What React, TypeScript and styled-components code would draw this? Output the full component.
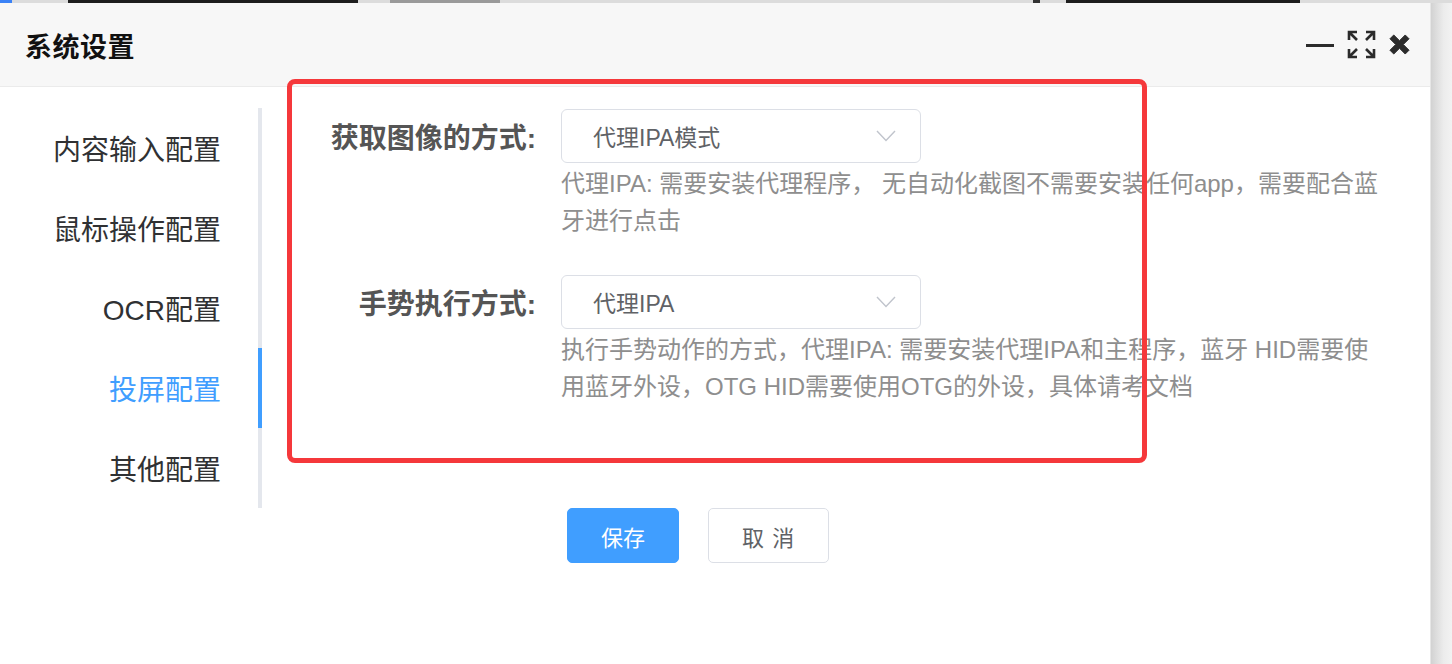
import React from 'react';
import styled, { createGlobalStyle } from 'styled-components';

const font = `"Liberation Sans", "Noto Sans CJK SC", sans-serif`;

const GlobalStyle = createGlobalStyle`
  html, body {
    margin: 0;
    padding: 0;
    background: #fff;
    font-family: ${font};
    overflow: hidden;
  }
`;

const Page = styled.div`
  width: 1452px;
  height: 664px;
  display: flex;
  flex-direction: column;
  overflow: hidden;
`;

// cropped strip of the window behind the dialog
const BackStrip = styled.div`
  height: 3px;
  display: flex;
  background: #dcdcdc;
  flex-shrink: 0;
`;

const StripPart = styled.div<{ $w: number; $c: string }>`
  width: ${(p) => p.$w}px;
  background: ${(p) => p.$c};
`;

const Stage = styled.div`
  flex: 1;
  display: flex;
`;

const Dialog = styled.div`
  width: 1430px;
  display: flex;
  flex-direction: column;
  background: #fff;
  border-right: 1px solid #e6e6e6;
  position: relative;
`;

const Shadow = styled.div`
  flex: 1;
  background: linear-gradient(to right, #d2d2d2, #ececec 60%, #f2f2f2);
`;

const Header = styled.div`
  height: 83px;
  display: flex;
  align-items: center;
  padding: 0 20px 0 25px;
  background: #f7f7f7;
  border-bottom: 1px solid #ebebeb;
`;

const Title = styled.div`
  font-size: 27px;
  font-weight: 700;
  color: #111;
  margin-right: auto;
  letter-spacing: 0.5px;
  padding-top: 2px;
`;

const HeaderIcons = styled.div`
  display: flex;
  align-items: center;
  gap: 13px;

  svg {
    display: block;
  }
`;

const Body = styled.div`
  display: flex;
  align-items: flex-start;
  padding-top: 21px;
`;

const Menu = styled.div`
  width: 258px;
  border-right: 4px solid #e4e7ed;
  display: flex;
  flex-direction: column;
`;

const MenuItem = styled.div<{ $active?: boolean }>`
  height: 80px;
  display: flex;
  align-items: center;
  justify-content: flex-end;
  padding-right: 37px;
  font-size: 28px;
  color: ${(p) => (p.$active ? '#409eff' : '#303133')};
  position: relative;

  &::after {
    content: '';
    display: ${(p) => (p.$active ? 'block' : 'none')};
    position: absolute;
    right: -4px;
    top: 0;
    bottom: 0;
    width: 4px;
    background: #409eff;
  }
`;

const FormArea = styled.div`
  flex: 1;
  padding: 1px 0 0 24px;
`;

const FormItem = styled.div`
  display: flex;
  margin-bottom: 36px;
`;

const Label = styled.div`
  width: 250px;
  padding-right: 25px;
  height: 54px;
  display: flex;
  align-items: center;
  justify-content: flex-end;
  font-size: 28px;
  font-weight: 700;
  color: #555;
  flex-shrink: 0;
`;

const Field = styled.div`
  width: 820px;
`;

const Select = styled.div`
  width: 360px;
  height: 54px;
  box-sizing: border-box;
  border: 1px solid #dcdfe6;
  border-radius: 6px;
  display: flex;
  align-items: center;
  padding: 0 24px 0 31px;
  font-size: 23px;
  color: #606266;

  span {
    margin-right: auto;
  }
`;

const Hint = styled.div`
  margin-top: 2px;
  font-size: 24px;
  line-height: 37px;
  color: #8e8e8e;
`;

const Actions = styled.div`
  display: flex;
  gap: 29px;
  padding: 67px 0 0 281px;
`;

const Button = styled.div<{ $primary?: boolean }>`
  height: 55px;
  box-sizing: border-box;
  padding: 0 33px;
  display: flex;
  align-items: center;
  justify-content: center;
  border-radius: 5px;
  font-size: 22px;
  background: ${(p) => (p.$primary ? '#409eff' : '#fff')};
  color: ${(p) => (p.$primary ? '#fff' : '#606266')};
  border: 1px solid ${(p) => (p.$primary ? '#409eff' : '#dcdfe6')};
  letter-spacing: ${(p) => (p.$primary ? 0 : 1)}px;
`;

// red annotation frame drawn over the form
const Highlight = styled.div`
  position: absolute;
  left: 287px;
  top: 76px;
  width: 860px;
  height: 384px;
  box-sizing: border-box;
  border: 5px solid #f5383b;
  border-radius: 8px;
  pointer-events: none;
`;

const Chevron = () => (
  <svg width="20" height="12" viewBox="0 0 20 12">
    <path d="M1 1 L10 10.5 L19 1" fill="none" stroke="#c0c4cc" strokeWidth="1.4" />
  </svg>
);

const MinimizeIcon = () => (
  <svg width="28" height="28" viewBox="0 0 28 28">
    <rect x="0" y="13" width="28" height="3" fill="#2b2b2b" />
  </svg>
);

const ExpandIcon = () => (
  <svg width="29" height="29" viewBox="0 0 29 29" fill="none" stroke="#2b2b2b" strokeWidth="2.6">
    <path d="M2 10 V2 H10 M2 2 L10 10" />
    <path d="M19 2 H27 V10 M27 2 L19 10" />
    <path d="M2 19 V27 H10 M2 27 L10 19" />
    <path d="M27 19 V27 H19 M27 27 L19 19" />
  </svg>
);

const CloseIcon = () => (
  <svg width="21" height="21" viewBox="0 0 22 22">
    <path
      d="M5 1 L11 7 L17 1 L21 5 L15 11 L21 17 L17 21 L11 15 L5 21 L1 17 L7 11 L1 5 Z"
      fill="#2b2b2b"
      strokeLinejoin="round"
      stroke="#2b2b2b"
      strokeWidth="1"
    />
  </svg>
);

const menu = ['内容输入配置', '鼠标操作配置', 'OCR配置', '投屏配置', '其他配置'];

const strip: [number, string][] = [
  [12, '#3b82f6'],
  [56, '#dcdcdc'],
  [290, '#1e1e1e'],
  [32, '#dcdcdc'],
  [110, '#9a9a9a'],
  [533, '#dcdcdc'],
  [7, '#333'],
  [26, '#dcdcdc'],
  [234, '#1e1e1e'],
];

export default function App() {
  return (
    <Page>
      <GlobalStyle />
      <BackStrip>
        {strip.map(([w, c], i) => (
          <StripPart key={i} $w={w} $c={c} />
        ))}
      </BackStrip>
      <Stage>
        <Dialog>
          <Header>
            <Title>系统设置</Title>
            <HeaderIcons>
              <MinimizeIcon />
              <ExpandIcon />
              <CloseIcon />
            </HeaderIcons>
          </Header>
          <Body>
            <Menu>
              {menu.map((m) => (
                <MenuItem key={m} $active={m === '投屏配置'}>
                  {m}
                </MenuItem>
              ))}
            </Menu>
            <FormArea>
              <FormItem>
                <Label>获取图像的方式:</Label>
                <Field>
                  <Select>
                    <span>代理IPA模式</span>
                    <Chevron />
                  </Select>
                  <Hint>代理IPA: 需要安装代理程序， 无自动化截图不需要安装任何app，需要配合蓝牙进行点击</Hint>
                </Field>
              </FormItem>
              <FormItem>
                <Label>手势执行方式:</Label>
                <Field>
                  <Select>
                    <span>代理IPA</span>
                    <Chevron />
                  </Select>
                  <Hint>
                    执行手势动作的方式，代理IPA: 需要安装代理IPA和主程序，蓝牙 HID需要使用蓝牙外设，OTG HID需要使用OTG的外设，具体请考文档
                  </Hint>
                </Field>
              </FormItem>
              <Actions>
                <Button $primary>保存</Button>
                <Button>取 消</Button>
              </Actions>
            </FormArea>
          </Body>
          <Highlight />
        </Dialog>
        <Shadow />
      </Stage>
    </Page>
  );
}
